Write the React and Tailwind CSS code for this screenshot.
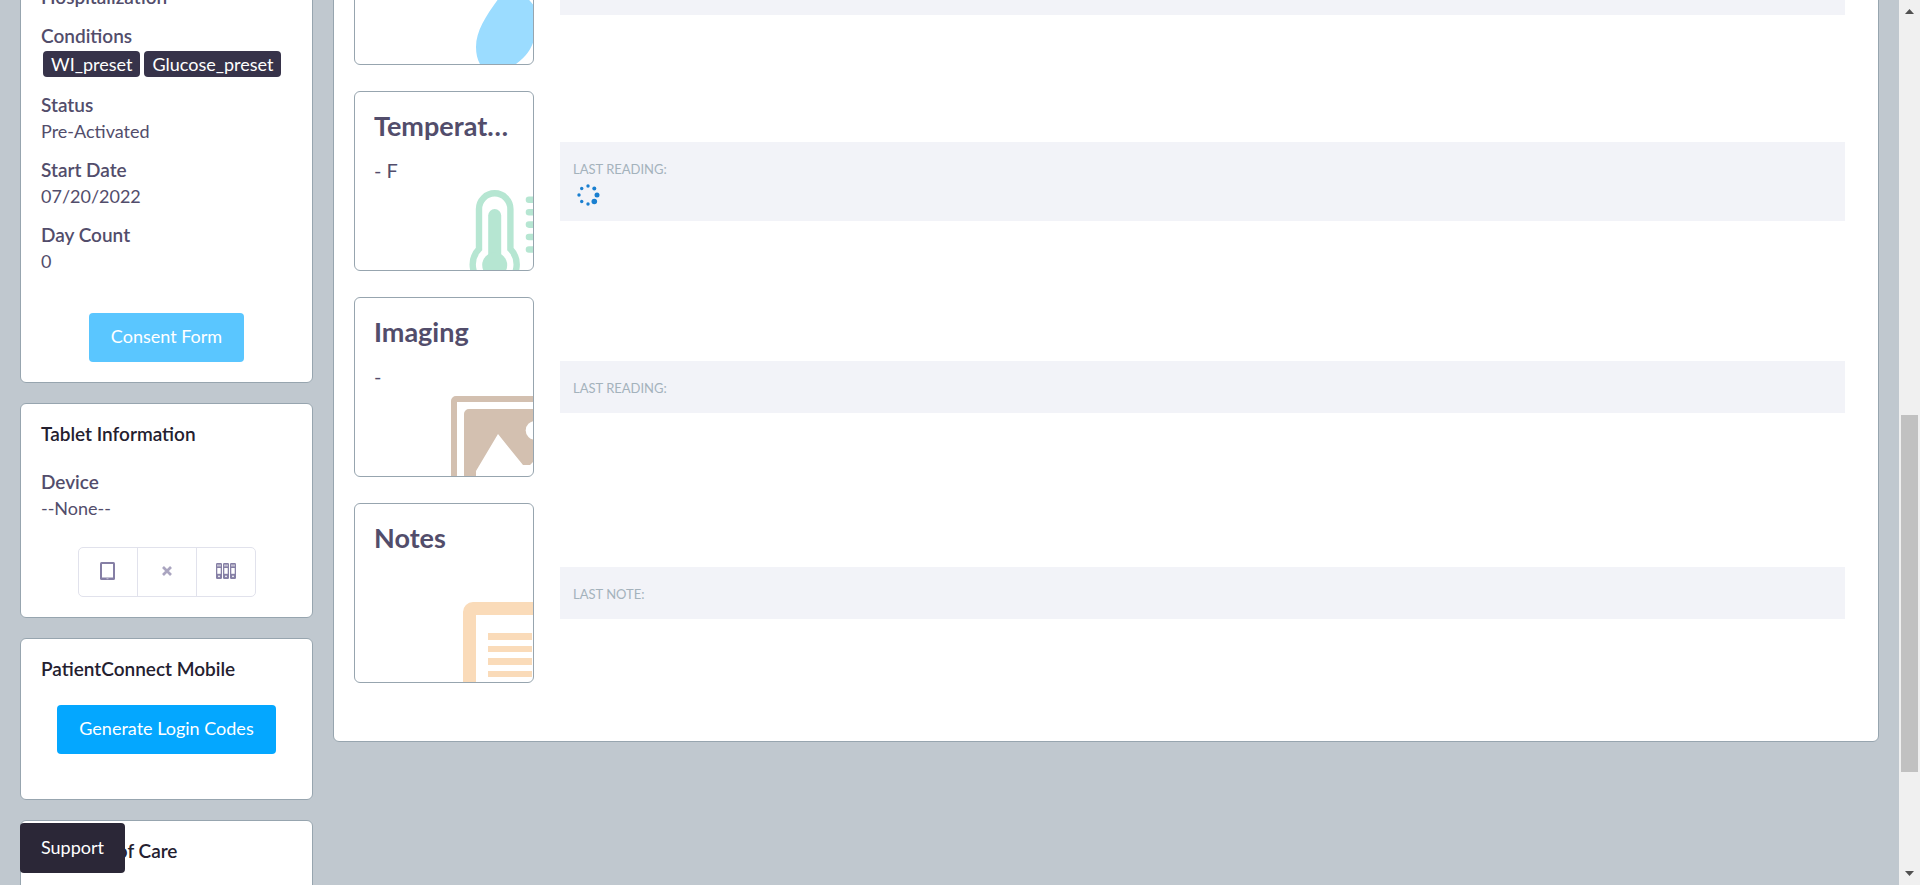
import React from "react";

const Group = ({ label, children }) => (
  <div className="mb-[13px]">
    <dt className="text-[19px] leading-[26px] font-semibold">{label}</dt>
    {children && <dd>{children}</dd>}
  </div>
);

const Panel = ({ title, children }) => (
  <section className="rounded-md border border-[#97a5af] bg-white px-5 pt-[17px] pb-5">
    {title && <h2 className="text-[19px] leading-[26px] font-semibold text-[#24202f]">{title}</h2>}
    {children}
  </section>
);

const Badge = ({ children }) => (
  <span className="rounded-[4px] bg-[#37334a] px-2 text-white">{children}</span>
);

const DropIcon = () => (
  <path d="M142.500 114C131 130 121 145 121 161C121 168 122.500 174 125.500 179C135 192 150 187 161 178C172 170 177 161 178.500 155V119C174 114 170 108 160 102Z" fill="#9bdcff" />
);

const ThermometerIcon = () => (
  <g fill="none" stroke="#b6e6d2" strokeLinecap="round">
    <path d="M124 157V117A15.7 15.7 0 0 1 155.400 117V157A22 22 0 1 1 124 157Z" strokeWidth="6.400" />
    <path d="M139.700 123.500V170" strokeWidth="13" />
    <circle cx="139.700" cy="173" r="12.500" fill="#b6e6d2" stroke="none" />
    <path d="M174 107.700H190M174 120.200H190M174 132.600H190M174 145H190M174 157.500H190" strokeWidth="6.600" />
  </g>
);

const PictureIcon = () => (
  <g fill="#d3c0b0">
    <path d="M96 190V103A5 5 0 0 1 101 98H190V104H102V190Z" />
    <path d="M109 190V116A5 5 0 0 1 114 111H190V152L175 167H168L143 136L121 173V190Z" />
    <circle cx="180" cy="132.400" r="9.300" fill="#fff" />
  </g>
);

const NoteIcon = () => (
  <g fill="#fadbb9">
    <path d="M108 190V108A10 10 0 0 1 118 98H190V111H121V190Z" />
    <path d="M133 129H177V136H133ZM133 142H177V148H133ZM133 154H177V161H133ZM133 167H177V173H133Z" />
  </g>
);

const Spinner = () => (
  <svg className="mt-1 ml-[3px] size-6" viewBox="0 0 24 24" fill="#1a7fd0">
    <circle cx="12" cy="3" r="1.700" />
    <circle cx="18.300" cy="5.500" r="2" />
    <circle cx="21" cy="12" r="2.500" />
    <circle cx="18.300" cy="18.500" r="2.800" />
    <circle cx="12" cy="21" r="1.700" />
    <circle cx="5.700" cy="18.500" r="1.700" />
    <circle cx="3" cy="12" r="1.700" />
    <circle cx="5.700" cy="5.500" r="1.700" />
  </svg>
);

const Binder = ({ x }) => (
  <g transform={`translate(${x} 0)`}>
    <rect width="6" height="16" rx="1.200" fill="#857fa5" />
    <rect x="1" y="1.500" width="4" height="2" fill="#c3c0d2" />
    <rect x="1.300" y="5" width="3.400" height="5.800" fill="#fff" />
    <circle cx="3" cy="13.300" r="0.900" fill="#fff" />
  </g>
);

const vitals = [
  { title: "", value: "", icon: <DropIcon />, note: "Last reading:", loading: true },
  { title: "Temperature", value: "- F", icon: <ThermometerIcon />, note: "Last reading:", loading: true },
  { title: "Imaging", value: "-", icon: <PictureIcon />, note: "Last reading:" },
  { title: "Notes", value: "", icon: <NoteIcon />, note: "Last note:" },
];

const Vital = ({ title, value, icon, note, loading }) => (
  <article className="flex items-center gap-[26px]">
    <div className="relative size-[180px] shrink-0 overflow-hidden rounded-md border border-[#97a5af] bg-white px-[19px] pt-[17px]">
      <svg className="absolute inset-0 size-full" viewBox="0 0 178 178" aria-hidden="true">{icon}</svg>
      <h3 className="relative truncate text-[27px] leading-[34px] font-bold">{title}</h3>
      <p className="relative mt-3 text-[20px] leading-[30px]">{value}</p>
    </div>
    <div className={loading ? "h-[79px] grow bg-[#f2f3f8] px-[13px] pt-[17px]" : "h-[52px] grow bg-[#f2f3f8] px-[13px] pt-[17px]"}>
      <p className="text-[13px] leading-5 text-[#a4b2bc] uppercase">{note}</p>
      {loading && <Spinner />}
    </div>
  </article>
);

const toolButton = "flex h-[50px] w-[60px] items-center justify-center border border-[#e1e2ec] pb-[2px] text-[#857fa5]";

export default function App() {
  return (
    <div className="flex h-screen overflow-hidden bg-[#c0c8cf] font-['Lato',sans-serif] text-[18px] leading-[26px] text-[#524d6b]">
      <div className="flex grow items-start gap-5 px-5">
        <aside className="-mt-[34px] flex w-[293px] shrink-0 flex-col gap-5">
          <Panel>
            <dl>
              <Group label="Hospitalization" />
              <Group label="Conditions">
                <span className="flex h-[30px] items-center gap-1 pl-[2px]">
                  <Badge>WI_preset</Badge>
                  <Badge>Glucose_preset</Badge>
                </span>
              </Group>
              <Group label="Status">Pre-Activated</Group>
              <Group label="Start Date">07/20/2022</Group>
              <Group label="Day Count">0</Group>
            </dl>
            <button className="mx-auto mt-[39px] block h-[49px] rounded-[4px] bg-[#5ac6ff] px-[22px] pb-1 text-white">Consent Form</button>
          </Panel>
          <Panel title="Tablet Information">
            <dl className="mt-[22px]">
              <dt className="text-[19px] leading-[26px] font-semibold">Device</dt>
              <dd>--None--</dd>
            </dl>
            <div className="mt-[26px] flex justify-center">
              <button aria-label="Assign tablet" className={toolButton + " rounded-l-[5px]"}>
                <svg className="h-[18px] w-[15px]" viewBox="0 0 15 18">
                  <rect width="15" height="18" rx="1.500" fill="currentColor" />
                  <rect x="2" y="2" width="11" height="13.500" fill="#fff" />
                  <rect x="6.500" y="16.200" width="2" height="1" fill="#c3c0d2" />
                </svg>
              </button>
              <button aria-label="Remove tablet" className={toolButton + " -ml-px"}>
                <svg className="size-3" viewBox="0 0 12 12"><path d="M2 2L10 10M10 2L2 10" stroke="#aaa5c0" strokeWidth="2.700" /></svg>
              </button>
              <button aria-label="Inventory" className={toolButton + " -ml-px rounded-r-[5px]"}>
                <svg className="h-4 w-5" viewBox="0 0 20 16">
                  <Binder x={0} />
                  <Binder x={7} />
                  <Binder x={14} />
                </svg>
              </button>
            </div>
          </Panel>
          <Panel title="PatientConnect Mobile">
            <button className="mx-auto mt-[23px] mb-[25px] block h-[49px] rounded-[4px] bg-[#04a7ff] px-[22px] pb-1 text-white">Generate Login Codes</button>
          </Panel>
          <Panel title="Program of Care">
            <div className="h-10" />
          </Panel>
        </aside>
        <main className="-mt-[137px] flex grow flex-col gap-[26px] rounded-md border border-[#97a5af] bg-white pt-[21px] pr-[33px] pb-[58px] pl-5">
          {vitals.map((v) => (
            <Vital key={v.title} {...v} />
          ))}
        </main>
      </div>
      <div className="flex w-[21px] shrink-0 flex-col items-center bg-[#f0f0f0]" aria-hidden="true">
        <svg className="h-[21px] w-[9px] shrink-0" viewBox="0 0 9 21"><path d="M0 14L4.500 9L9 14Z" fill="#505050" /></svg>
        <div className="grow-[394]" />
        <div className="w-[17px] grow-[357] bg-[#c1c1c1]" />
        <div className="grow-[92]" />
        <svg className="h-[21px] w-[9px] shrink-0" viewBox="0 0 9 21"><path d="M0 7L4.500 12L9 7Z" fill="#505050" /></svg>
      </div>
      <button className="fixed bottom-3 left-5 h-[50px] rounded-[4px] bg-[#2b2737] px-[21px] pb-[2px] text-white">Support</button>
    </div>
  );
}
